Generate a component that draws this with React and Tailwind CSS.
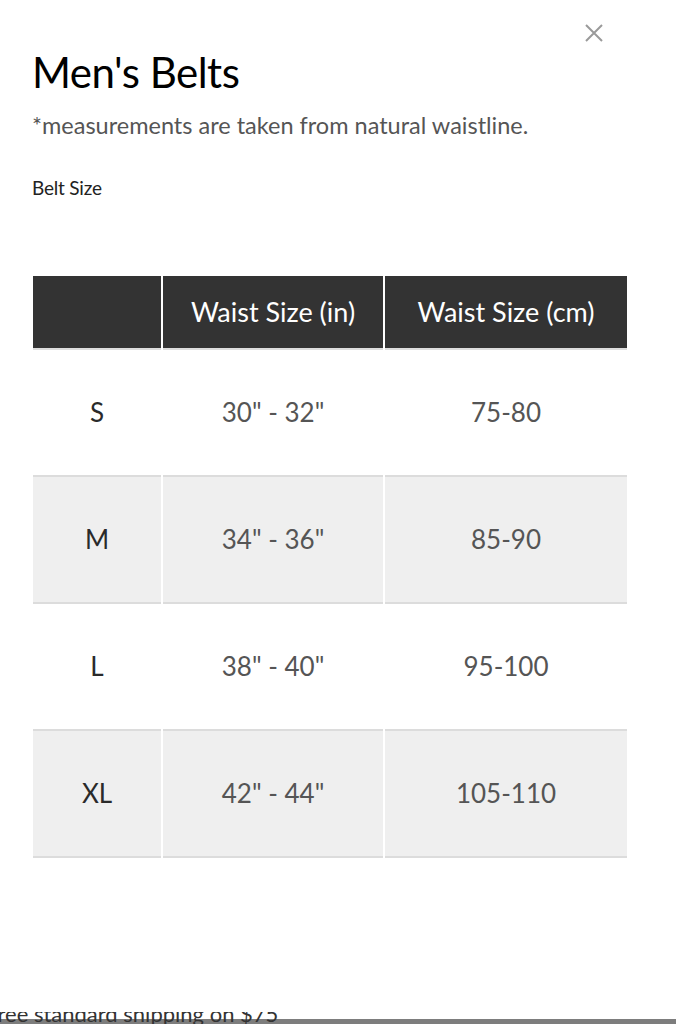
const rows = [
  { size: "S", inch: '30" - 32"', cm: "75-80", shade: false },
  { size: "M", inch: '34" - 36"', cm: "85-90", shade: true },
  { size: "L", inch: '38" - 40"', cm: "95-100", shade: false },
  { size: "XL", inch: '42" - 44"', cm: "105-110", shade: true },
];

const CloseIcon = () => (
  <svg width="20" height="20" viewBox="0 0 20 20" fill="none" stroke="#9a9a9a" strokeWidth="2">
    <path d="M2 2 L18 18 M18 2 L2 18" />
  </svg>
);

export default function App() {
  return (
    <div className="w-[676px] h-[1024px] bg-white overflow-hidden flex flex-col" style={{ fontFamily: "Lato, 'Open Sans', sans-serif" }}>
      <div className="relative flex-1 px-[32px] pt-[46px]">
        <button className="absolute top-[23px] right-[72px]">
          <CloseIcon />
        </button>

        <h1 className="text-[42px] leading-[52px] text-black tracking-[-0.5px]">Men's Belts</h1>
        <p className="mt-[12px] text-[23.5px] leading-[30px] text-[#555]">
          *measurements are taken from natural waistline.
        </p>
        <p className="mt-[35px] text-[19px] leading-[26px] text-[#222] tracking-[-0.2px]">Belt Size</p>

        <div className="mt-[75px] w-[594px] ml-[1px] grid grid-cols-[128px_220px_242px] gap-x-[2px]">
          <div className="h-[74px] bg-[#333] border-b-2 border-[#dedede]" />
          <div className="h-[74px] bg-[#333] border-b-2 border-[#dedede] flex items-center justify-center text-white text-[27px]">
            Waist Size (in)
          </div>
          <div className="h-[74px] bg-[#333] border-b-2 border-[#dedede] flex items-center justify-center text-white text-[27px]">
            Waist Size (cm)
          </div>

          {rows.map((r) => (
            <div key={r.size} className="contents">
              <div className={`h-[127px] border-b-2 border-[#dcdcdc] flex items-center justify-center text-[26px] text-[#2a2a2a] ${r.shade ? "bg-[#efefef]" : "bg-white"}`}>
                {r.size}
              </div>
              <div className={`h-[127px] border-b-2 border-[#dcdcdc] flex items-center justify-center text-[26px] text-[#555] ${r.shade ? "bg-[#efefef]" : "bg-white"}`}>
                {r.inch}
              </div>
              <div className={`h-[127px] border-b-2 border-[#dcdcdc] flex items-center justify-center text-[26px] text-[#555] ${r.shade ? "bg-[#efefef]" : "bg-white"}`}>
                {r.cm}
              </div>
            </div>
          ))}
        </div>
      </div>

      <div className="h-[12px] overflow-hidden relative">
        <div className="absolute left-0 right-0 bottom-0 h-[5px] bg-[#7d7d7d]" />
        <p className="absolute left-[-14px] top-[-9px] text-[22px] leading-[22px] text-[#333] whitespace-nowrap">
          Free standard shipping on $75
        </p>
      </div>
    </div>
  );
}
